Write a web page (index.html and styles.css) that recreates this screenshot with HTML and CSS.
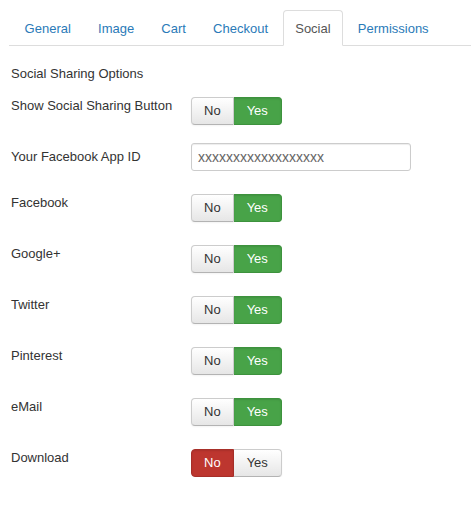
FILE: index.html
```html
<!DOCTYPE html>
<html>
<head>
<meta charset="utf-8">
<link rel="stylesheet" href="styles.css">
</head>
<body>
<div class="page">
  <ul class="tabs">
    <li class="tab"><a>General</a></li>
    <li class="tab"><a>Image</a></li>
    <li class="tab"><a>Cart</a></li>
    <li class="tab"><a>Checkout</a></li>
    <li class="tab active"><a>Social</a></li>
    <li class="tab"><a>Permissions</a></li>
  </ul>
  <div class="form">
    <div class="heading">Social Sharing Options</div>
    <div class="row first">
      <div class="label">Show Social Sharing Button</div>
      <div class="toggle"><span class="btn">No</span><span class="btn yes on">Yes</span></div>
    </div>
    <div class="row">
      <div class="label label-input">Your Facebook App ID</div>
      <div class="input">xxxxxxxxxxxxxxxxxx</div>
    </div>
    <div class="row">
      <div class="label">Facebook</div>
      <div class="toggle"><span class="btn">No</span><span class="btn yes on">Yes</span></div>
    </div>
    <div class="row">
      <div class="label">Google+</div>
      <div class="toggle"><span class="btn">No</span><span class="btn yes on">Yes</span></div>
    </div>
    <div class="row">
      <div class="label">Twitter</div>
      <div class="toggle"><span class="btn">No</span><span class="btn yes on">Yes</span></div>
    </div>
    <div class="row">
      <div class="label">Pinterest</div>
      <div class="toggle"><span class="btn">No</span><span class="btn yes on">Yes</span></div>
    </div>
    <div class="row">
      <div class="label">eMail</div>
      <div class="toggle"><span class="btn">No</span><span class="btn yes on">Yes</span></div>
    </div>
    <div class="row">
      <div class="label">Download</div>
      <div class="toggle"><span class="btn no-on">No</span><span class="btn yes">Yes</span></div>
    </div>
  </div>
</div>
</body>
</html>
```
FILE: styles.css
```css
html, body {
  margin: 0;
  padding: 0;
  background: #fff;
}
body {
  font-family: "Liberation Sans", Arial, sans-serif;
  font-size: 13px;
  line-height: 18px;
  color: #333;
}
.page {
  padding: 10px 0 0 9px;
}
.tabs {
  list-style: none;
  margin: 0 0 19px 0;
  padding: 0 0 0 3px;
  display: flex;
  border-bottom: 1px solid #ddd;
}
.tab {
  margin: 0 2px -1px 0;
}
.tab a {
  display: block;
  padding: 9px 11.6px 7px;
  border: 1px solid transparent;
  border-radius: 4px 4px 0 0;
  color: #2a7ab8;
  line-height: 18px;
}
.tab.active a {
  color: #555;
  background: #fff;
  border-color: #ddd #ddd transparent;
}
.form {
  padding-left: 2px;
}
.heading {
  line-height: 18px;
  margin-bottom: 14px;
}
.row {
  display: flex;
  align-items: flex-start;
  margin-top: 23px;
}
.row.first {
  margin-top: 0;
}
.row.first + .row {
  margin-top: 18px;
}
.label {
  width: 180px;
  flex: none;
  line-height: 18px;
}
.label-input {
  padding-top: 5px;
}
.toggle {
  display: flex;
}
.btn {
  display: block;
  padding: 4px 12px;
  line-height: 18px;
  font-size: 13px;
  color: #333;
  background: linear-gradient(#ffffff, #e6e6e6);
  border: 1px solid #cccccc;
  border-bottom-color: #b3b3b3;
  box-shadow: inset 0 1px 0 rgba(255,255,255,0.2), 0 1px 2px rgba(0,0,0,0.05);
}
.btn:first-child {
  border-radius: 4px 0 0 4px;
}
.btn.yes {
  padding: 4px 13px;
  border-left: none;
  border-radius: 0 4px 4px 0;
}
.btn.on {
  color: #fff;
  background: #48a348;
  border-color: #3d923d;
  box-shadow: inset 0 1px 2px rgba(0,0,0,0.1);
}
.btn.no-on {
  color: #fff;
  background: #bd362f;
  border-color: #a72f29;
  box-shadow: inset 0 1px 2px rgba(0,0,0,0.1);
}
.input {
  width: 206px;
  height: 18px;
  padding: 4px 6px;
  line-height: 18px;
  font-size: 14px;
  border: 1px solid #ccc;
  border-radius: 3px;
  color: #666;
  box-shadow: inset 0 1px 1px rgba(0,0,0,0.075);
}
```
